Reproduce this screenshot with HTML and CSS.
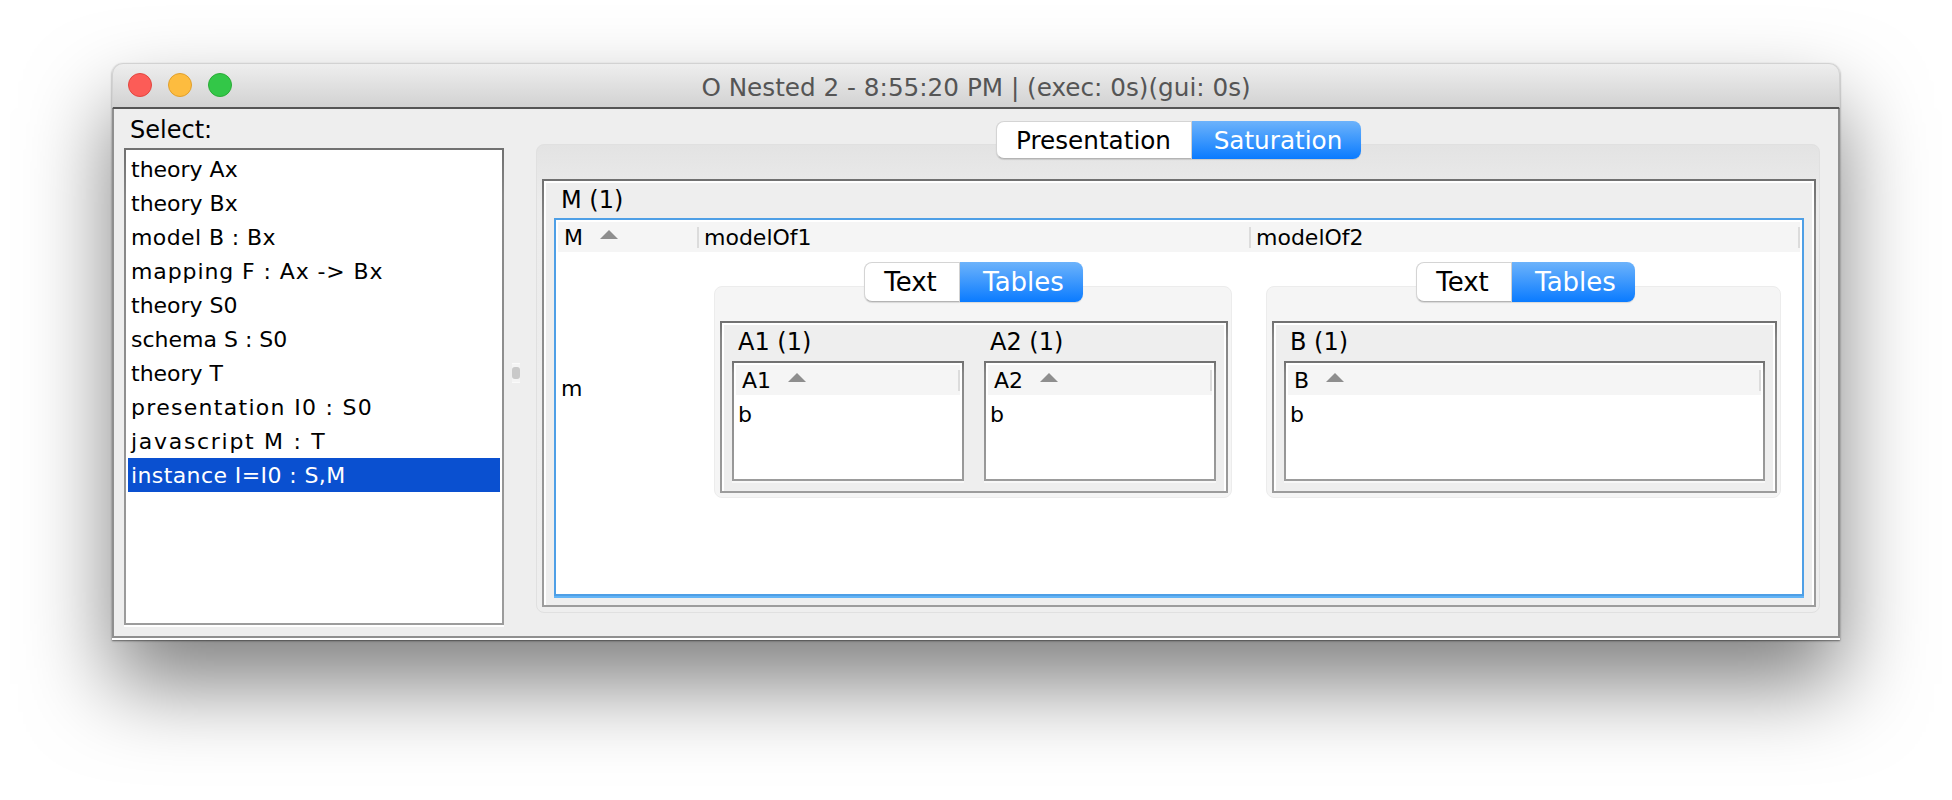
FILE: index.html
```html
<!DOCTYPE html>
<html lang="en">
<head>
  <meta charset="UTF-8">
  <title>O Nested 2</title>
  <link rel="stylesheet" href="styles.css">
</head>
<body>

  <div class="window">
    <div class="titlebar">
      <div class="lights">
        <span class="light red"></span>
        <span class="light yellow"></span>
        <span class="light green"></span>
      </div>
      <div class="title">O Nested 2 - 8:55:20 PM | (exec: 0s)(gui: 0s)</div>
    </div>

    <div class="content">
      <div class="sidebar">
        <div class="select-label">Select:</div>
        <div class="list etched">
          <div class="item">theory Ax</div>
          <div class="item">theory Bx</div>
          <div class="item track-s">model B : Bx</div>
          <div class="item track-m">mapping F : Ax -&gt; Bx</div>
          <div class="item">theory S0</div>
          <div class="item">schema S : S0</div>
          <div class="item">theory T</div>
          <div class="item track-l">presentation I0 : S0</div>
          <div class="item track-xl">javascript M : T</div>
          <div class="item selected track-s">instance I=I0 : S,M</div>
        </div>
      </div>

      <div class="splitter"><span class="grip"></span></div>

      <div class="main">
        <div class="pane">
          <div class="tabs top-tabs">
            <span class="tab tab-presentation">Presentation</span>
            <span class="tab active tab-saturation">Saturation</span>
          </div>

          <div class="panel outer-panel etched">
            <div class="panel-title">M (1)</div>
            <div class="focus-table">
              <div class="table-row table-head">
                <div class="head-cell"><span>M</span><i class="sort"></i><i class="sep"></i></div>
                <div class="head-cell"><span>modelOf1</span><i class="sep"></i></div>
                <div class="head-cell"><span>modelOf2</span><i class="sep"></i></div>
              </div>
              <div class="table-row table-body">
                <div class="row-name">m</div>

                <div class="nested-cell">
                  <div class="tabs small">
                    <span class="tab tab-text">Text</span>
                    <span class="tab active tab-tables">Tables</span>
                  </div>
                  <div class="pane nested-pane">
                    <div class="panel nested-panel etched">
                      <div class="column">
                        <div class="panel-title">A1 (1)</div>
                        <div class="box etched">
                          <div class="box-head"><span>A1</span><i class="sort"></i><i class="sep"></i></div>
                          <div class="box-row">b</div>
                        </div>
                      </div>
                      <div class="column">
                        <div class="panel-title">A2 (1)</div>
                        <div class="box etched">
                          <div class="box-head"><span>A2</span><i class="sort"></i><i class="sep"></i></div>
                          <div class="box-row">b</div>
                        </div>
                      </div>
                    </div>
                  </div>
                </div>

                <div class="nested-cell">
                  <div class="tabs small">
                    <span class="tab tab-text">Text</span>
                    <span class="tab active tab-tables">Tables</span>
                  </div>
                  <div class="pane nested-pane">
                    <div class="panel nested-panel etched">
                      <div class="column">
                        <div class="panel-title">B (1)</div>
                        <div class="box etched">
                          <div class="box-head"><span>B</span><i class="sort"></i><i class="sep"></i></div>
                          <div class="box-row">b</div>
                        </div>
                      </div>
                    </div>
                  </div>
                </div>
              </div>
            </div>
          </div>
        </div>
      </div>
    </div>
  </div>

</body>
</html>
```

FILE: styles.css
```css
* {
  box-sizing: border-box;
}

body {
  margin: 0;
  padding: 63px 0 0 112px;
  height: 800px;
  overflow: hidden;
  background: #fff;
  font-family: "DejaVu Sans", sans-serif;
  font-size: 21px;
  color: #000;
}

.window {
  width: 1728px;
  height: 577px;
  display: flex;
  flex-direction: column;
  border-radius: 11px 11px 0 0;
  background: #fff;
  box-shadow: 0 44px 85px rgba(0, 0, 0, 0.5), 0 1px 2px rgba(0, 0, 0, 0.5);
}

/* title bar */
.titlebar {
  height: 46px;
  flex: none;
  display: flex;
  align-items: center;
  position: relative;
  border: 1px solid #d2d2d2;
  border-bottom: 2px solid #555;
  border-radius: 11px 11px 0 0;
  background: linear-gradient(#eeeeee, #d2d2d2);
}

.lights {
  display: flex;
  gap: 16px;
  padding-left: 15px;
  margin-top: -1px;
}

.light {
  width: 24px;
  height: 24px;
  border-radius: 50%;
}

.red {
  background: #fc5c57;
  border: 1px solid #e2463f;
}

.yellow {
  background: #fdbc3f;
  border: 1px solid #e1a02c;
}

.green {
  background: #33c748;
  border: 1px solid #2aac36;
}

.title {
  position: absolute;
  left: 0;
  right: 0;
  top: 9px;
  text-align: center;
  font-size: 24.7px;
  color: #555;
}

/* main area */
.content {
  flex: 1;
  margin-bottom: 2px;
  display: flex;
  background: #eee;
  border: solid #8f8f8f;
  border-width: 0 2px 2px;
}

.sidebar {
  width: 390px;
  padding-left: 10px;
  flex: none;
  display: flex;
  flex-direction: column;
}

.select-label {
  height: 39px;
  line-height: 42px;
  padding-left: 6px;
  font-size: 24px;
}

.etched {
  border: 2px solid;
  border-image: linear-gradient(#707070, #868686 10%, #9c9c9c) 2;
}

.list {
  width: 380px;
  height: 477px;
  padding: 2px;
  background: #fff;
  font-size: 22px;
  box-shadow: 0 2px 0 #fff;
}

.item {
  height: 34px;
  line-height: 36px;
  padding-left: 3px;
  white-space: nowrap;
}

.track-s {
  letter-spacing: 0.4px;
}

.track-m {
  letter-spacing: 0.9px;
}

.track-l {
  letter-spacing: 1.3px;
}

.track-xl {
  letter-spacing: 1.7px;
}

.selected {
  background: #0a50d0;
  color: #fff;
}

.splitter {
  width: 32px;
  flex: none;
  padding-right: 8px;
  display: flex;
  align-items: center;
  justify-content: center;
}

.grip {
  width: 8px;
  height: 20px;
  display: flex;
  align-items: center;
  background: #f4f4f4;
  border: solid #fafafa;
  border-width: 1px 0;
}

.grip::before {
  content: "";
  width: 8px;
  height: 12px;
  border-radius: 3px;
  background: #c9c9c9;
}

.main {
  flex: 1;
  padding: 35px 20px 0 0;
}

/* tab panes */
.pane {
  height: 469px;
  padding: 0 3px 5px 5px;
  border: 1px solid #e0e0e0;
  border-radius: 8px;
  background: linear-gradient(#e3e3e3, #ececec 12%, #eeeeee);
}

.tabs {
  display: flex;
  justify-content: center;
  height: 38px;
  margin-top: -24px;
  margin-bottom: 20px;
}

.top-tabs {
  padding-right: 2px;
}

.tab {
  display: flex;
  align-items: center;
  justify-content: center;
  font-size: 24.7px;
  background: #fff;
  border: 1px solid #d4d4d4;
  border-bottom-color: #b4b4b4;
  border-radius: 8px 0 0 8px;
  box-shadow: 0 1px 1px rgba(0, 0, 0, 0.12);
}

.tab.active {
  color: #fff;
  border: none;
  border-radius: 0 8px 8px 0;
  background: linear-gradient(#6db3fb, #0a7bff);
}

.tab-presentation {
  width: 196px;
}

.tab-saturation {
  width: 169px;
  padding-left: 4px;
}

.tab-text {
  width: 96px;
  padding-right: 2px;
}

.tab-tables {
  width: 123px;
  padding-left: 5px;
}

.tabs.small .tab {
  font-size: 26px;
}

.panel {
  background: #eee;
  box-shadow: inset 2px 2px 0 #fff, inset -2px 0 0 #fff;
}

.outer-panel {
  height: 428px;
  padding: 0 10px 9px;
}

.panel-title {
  height: 37px;
  line-height: 38px;
  padding-left: 7px;
  font-size: 24px;
  white-space: nowrap;
}

/* the big table with the focus ring */
.focus-table {
  height: 378px;
  padding: 2px;
  background: #fff;
  border: 2px solid #4e9fe6;
  box-shadow: 0 2px 0 #62b4f6;
}

.table-row {
  display: grid;
  grid-template-columns: 141px 552px 549px;
}

.table-head {
  height: 30px;
  background: #f5f5f5;
}

.head-cell,
.box-head {
  display: flex;
  align-items: center;
  padding-left: 6px;
  font-size: 22px;
}

.head-cell + .head-cell {
  padding-left: 5px;
}

.sort {
  width: 0;
  height: 0;
  margin: -5px 0 0 17px;
  border-left: 9px solid transparent;
  border-right: 9px solid transparent;
  border-bottom: 9px solid #8e8e8e;
}

.sep {
  width: 2px;
  height: 21px;
  margin-left: auto;
  background: #dcdcdc;
}

.table-body {
  height: 274px;
}

.row-name {
  align-self: center;
  padding: 0 0 2px 3px;
  font-size: 22px;
}

.nested-cell {
  padding: 10px 19px 0 15px;
}

.nested-cell:last-child .tabs {
  padding-left: 3px;
}

.tabs.small {
  height: 40px;
  margin: 0;
}

.nested-pane {
  height: 212px;
  margin-top: -16px;
  padding: 34px 3px 5px 5px;
  border-color: #ececec;
  background: #f5f5f5;
}

.nested-panel {
  height: 172px;
  display: flex;
  gap: 20px;
  padding: 0 10px 10px;
}

.column {
  flex: 1;
}

.nested-panel .panel-title {
  height: 38px;
  padding-left: 6px;
}

.box {
  height: 120px;
  padding: 2px;
  background: #fff;
  box-shadow: 0 2px 0 #f8f8f8;
}

.box-head {
  height: 30px;
  background: #f5f5f5;
}

.box-row {
  height: 34px;
  line-height: 40px;
  padding-left: 2px;
  font-size: 22px;
}
```
